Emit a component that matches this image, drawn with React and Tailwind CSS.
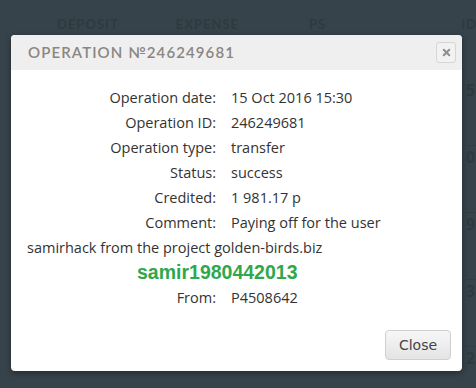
import { X } from 'lucide-react';

const rows = [
  { label: 'Operation date:', value: '15 Oct 2016 15:30' },
  { label: 'Operation ID:', value: '246249681' },
  { label: 'Operation type:', value: 'transfer' },
  { label: 'Status:', value: 'success' },
  { label: 'Credited:', value: '1 981.17 р' },
  { label: 'Comment:', value: 'Paying off for the user' },
];

const bgRows = ['55', '0', '9', '3', '2'];

export default function App() {
  return (
    <div className="relative w-[476px] h-[388px] overflow-hidden bg-[#36434a] font-['Open_Sans',sans-serif]">
      {/* table behind the overlay */}
      <div className="flex pt-[15px] text-[13px] font-bold tracking-[1px] text-[#2f3a40] font-['Lato',sans-serif]">
        <span className="ml-[57px]">DEPOSIT</span>
        <span className="ml-[57px]">EXPENSE</span>
        <span className="ml-[70px]">PS</span>
        <span className="ml-[135px]">ID</span>
      </div>
      <div className="flex flex-col items-end pt-[44px]">
        {bgRows.map((r) => (
          <div key={r} className="w-[10px] h-[67px] border-b border-[#323d43] text-[16px] font-bold text-[#2f3a40] leading-[22px] overflow-hidden">
            {r}
          </div>
        ))}
      </div>

      {/* modal */}
      <div className="absolute left-[11px] top-[35px] w-[451px] h-[336px] rounded-[4px] overflow-hidden bg-white shadow-[0_2px_6px_rgba(0,0,0,0.35)] flex flex-col">
        <div className="h-[35px] bg-[#efefef] flex items-center justify-between pl-[17px] pr-[6px]">
          <span className="text-[15px] text-[#8b8682] tracking-[1.1px] font-['Lato',sans-serif] font-semibold">
            OPERATION №246249681
          </span>
          <button className="w-[20px] h-[21px] rounded-[3px] border border-[#d6d6d6] bg-[#f2f2f2] flex items-center justify-center">
            <X size={11} strokeWidth={4.5} color="#8f8f8f" />
          </button>
        </div>

        <div className="pt-[15px] text-[14.5px] text-[#333] leading-[25px]">
          {rows.map((r) => (
            <div key={r.label} className="grid grid-cols-[205px_1fr] gap-x-[15px]">
              <span className="text-right">{r.label}</span>
              <span>{r.value}</span>
            </div>
          ))}
          <div className="pl-[16px]">samirhack from the project golden-birds.biz</div>
          <div className="pl-[126px] font-['Liberation_Sans',sans-serif] font-bold text-[19.5px] text-[#2fa84b] leading-[25px]">
            samir1980442013
          </div>
          <div className="grid grid-cols-[205px_1fr] gap-x-[15px]">
            <span className="text-right">From:</span>
            <span>P4508642</span>
          </div>
        </div>

        <div className="mt-auto flex justify-end pr-[11px] pb-[11px]">
          <button className="w-[66px] h-[30px] rounded-[4px] border border-[#cfcfcf] bg-gradient-to-b from-[#f7f7f7] to-[#e4e4e4] text-[14px] text-[#444] font-['DejaVu_Sans',sans-serif]">
            Close
          </button>
        </div>
      </div>
    </div>
  );
}
